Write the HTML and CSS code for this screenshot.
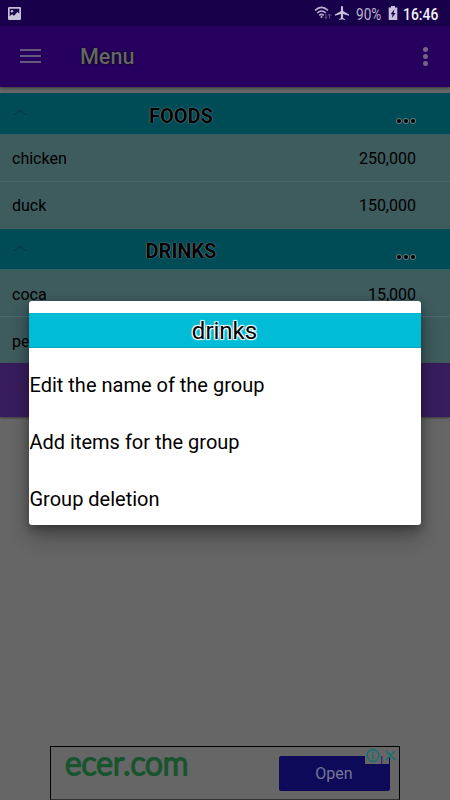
FILE: index.html
```
<!DOCTYPE html>
<html lang="en">
<head>
<meta charset="utf-8">
<title>Menu</title>
<link rel="stylesheet" href="styles.css">
</head>
<body>
<div class="screen">
  <header class="status">
    <svg class="picture" viewBox="0 0 13 13"><rect width="13" height="13" rx="1.2" fill="#c9c0dc"/><path d="M1.7 1.8h9.6v4.8L9.4 5 6 8.8 4.1 7.3 1.7 9z" fill="#18004a"/><circle cx="4" cy="4.3" r="1.2" fill="#c9c0dc"/></svg>
    <svg class="wifi" viewBox="0 0 18 14" fill="none" stroke="#bcb1d1" stroke-width="1.5"><path d="M1 4.4Q7.5-1.7 14 4.4M3.2 7Q7.5 3 11.8 7M5.3 9.4Q7.5 7.4 9.7 9.4"/><circle cx="7.5" cy="11" r="1" fill="#bcb1d1" stroke="none"/><path d="M12 8v4.5m-1.5-1.7 1.5 1.7 1.5-1.7M15.5 12.5V8M14 9.7 15.500 8 17 9.700" stroke="#655084" stroke-width="1"/></svg>
    <svg class="plane" viewBox="2 2 20 20" fill="#c9c0dc"><path d="M22 16v-2l-8.500-5V3.500a1.500 1.500 0 0 0-3 0V9L2 14v2l8.500-2.500V19L8 20.500V22l4-1 4 1v-1.500L13.500 19v-5.500z"/></svg>
    <span class="percent">90%</span>
    <svg class="battery" viewBox="0 0 10 14"><path d="M3 0h4v1.500h2.300V14H.7V1.500H3z" fill="#c9c0dc"/><path d="M6.400 3.200 2.600 8.200h2L3.900 12l3.700-5.100h-2z" fill="#18004a"/></svg>
    <span class="clock">16:46</span>
  </header>
  <nav class="appbar">
    <div class="burger"><i></i><i></i><i></i></div>
    <h1>Menu</h1>
    <div class="kebab"><i></i><i></i><i></i></div>
  </nav>
  <main>
    <section class="foods">
      <div class="group"><svg class="chevron" viewBox="0 0 14 8"><path d="m1 7 6-5 6 5"/></svg><h2>FOODS</h2><div class="more"><i></i><i></i><i></i></div></div>
      <div class="item"><span>chicken</span><span>250,000</span></div>
      <div class="item"><span>duck</span><span>150,000</span></div>
    </section>
    <section class="drinks">
      <div class="group"><svg class="chevron" viewBox="0 0 14 8"><path d="m1 7 6-5 6 5"/></svg><h2>DRINKS</h2><div class="more"><i></i><i></i><i></i></div></div>
      <div class="item"><span>coca</span><span>15,000</span></div>
      <div class="item last"><span>pepsi</span></div>
    </section>
    <div class="footer"></div>
  </main>
  <aside class="ad">
    <svg class="brand" viewBox="0 0 130 50"><text x="1" y="27.500" textLength="123.500" lengthAdjust="spacingAndGlyphs">ecer.com</text></svg>
    <div class="open">Open</div>
    <div class="choices">
      <svg viewBox="0 0 34 17" fill="none" stroke="#167076" stroke-width="1.500"><circle cx="8" cy="8.500" r="5.900"/><path d="M8 7v5M8 4.600v1.500M21 4l9 9M30 4l-9 9"/><path d="M16.700 9v8" stroke="#36306f"/></svg>
    </div>
  </aside>
  <div class="dialog">
    <h3>drinks</h3>
    <div class="option">Edit the name of the group</div>
    <div class="option">Add items for the group</div>
    <div class="option">Group deletion</div>
  </div>
</div>
</body>
</html>
```
FILE: styles.css
```
* { box-sizing: border-box; }
body { margin: 0; font-family: Roboto, sans-serif; color: #000; }
h1, h2, h3 { margin: 0; }
svg { display: block; flex: none; }
.screen { position: relative; display: flex; flex-direction: column; width: 450px; height: 800px; overflow: hidden; background: #666; }

.status { display: flex; align-items: center; flex: none; height: 26px; padding: 0 11px 0 8px; background: #18004a; }
.picture { width: 13px; height: 13px; }
.wifi { width: 18px; height: 14px; margin-left: auto; }
.plane { width: 14px; height: 14px; margin-left: 3px; }
.percent { width: 27px; margin: 2px 0 0 7px; font-size: 16px; color: #bcb3ca; transform: scaleX(.85); transform-origin: left; }
.battery { width: 10px; height: 14px; margin-left: 5px; }
.clock { width: 36px; margin: 2px 0 0 5px; font-size: 16px; font-weight: 500; color: #f4f1f8; transform: scaleX(.87); transform-origin: left; }

.appbar { display: flex; align-items: center; flex: none; height: 61px; padding: 0 22px 0 20px; background: #27005f; box-shadow: 0 1px 3px rgba(0,0,0,.5); }
.burger { display: flex; flex-direction: column; gap: 4px; width: 21px; margin-top: -1px; }
.burger i { height: 2px; background: #69587d; }
h1 { margin-left: 38.500px; font-size: 22px; font-weight: 500; line-height: 30px; color: #66666a; transform: scaleX(.98); transform-origin: left; text-shadow: 0 0 1px #000, 0 0 2px #000; }
.kebab { display: flex; flex-direction: column; gap: 2px; margin-left: auto; }
.kebab i { width: 5px; height: 5px; border-radius: 50%; background: #75638a; }

main { flex: none; margin-top: 6px; }
.group { display: grid; grid-template-columns: 60px 1fr 60px; height: 41.500px; padding: 0 12px; background: #004c56; border-bottom: 1px solid #315f65; }
.drinks .group { height: 40.500px; }
.chevron { width: 14px; height: 8px; margin: 15px 0 0 1px; fill: none; stroke: #033840; stroke-width: 1.3; }
h2 { font-size: 20px; font-weight: 700; line-height: 46px; text-align: center; transform: translateX(-44px); text-shadow: 0 0 1px #8a9798, 0 0 1px #8a9798; }
.drinks h2 { line-height: 45px; }
.more { display: flex; justify-content: flex-end; gap: 3px; height: 4px; margin: 26px 23px 0 0; }
.more i { width: 4px; height: 4px; border-radius: 50%; background: #000; box-shadow: 0 0 0 1px #66787b; }
.item { display: flex; justify-content: space-between; height: 47px; padding: 0 34px 0 12px; background: #3e5b5e; border-bottom: 1px solid #506768; font-size: 16px; line-height: 47px; }
.foods .item:last-child { height: 47.500px; border-bottom: 0; }
.drinks .item { line-height: 50px; }
.item.last { height: 46.500px; border-bottom: 0; }
.footer { height: 54px; background: #381d5d; box-shadow: 0 1px 2px rgba(0,0,0,.4); }

.ad { position: relative; display: flex; justify-content: space-between; align-items: flex-start; width: 350px; height: 54px; margin: auto auto 0; padding: 0 9.500px 0 12.500px; border: 1px solid #000; border-bottom-color: #333; }
.brand { width: 130px; height: 50px; overflow: visible; }
.brand text { font: 300 34px Lato, sans-serif; fill: #18542d; stroke: #18542d; stroke-width: 2.2; stroke-linecap: round; stroke-linejoin: round; }
.open { width: 111px; height: 35px; margin-top: 9px; border-radius: 2px; background: #0d0b59; font-size: 16px; line-height: 36px; text-align: center; color: #777696; }
.choices { position: absolute; top: 0; right: 0; width: 34px; height: 17px; }
.choices svg { width: 34px; height: 17px; background: linear-gradient(90deg, #666 24px, transparent 24px); }

.dialog { position: absolute; left: 28.500px; top: 301px; width: 392px; height: 223.500px; padding-top: 11.500px; border-radius: 3px; background: #fff; box-shadow: 0 12px 20px rgba(0,0,0,.3), 0 3px 8px rgba(0,0,0,.3); }
h3 { height: 35.500px; margin-bottom: 9px; background: #00bcd6; border-bottom: 1px solid #10a5bb; font-size: 24px; font-weight: 400; line-height: 37px; text-align: center; text-shadow: 1px 1px 1px #fff, -1px -1px 1px #fff, 1px -1px 1px #fff, -1px 1px 1px #fff; }
.option { height: 57px; padding-left: 1px; font-size: 20px; line-height: 57px; }
```
